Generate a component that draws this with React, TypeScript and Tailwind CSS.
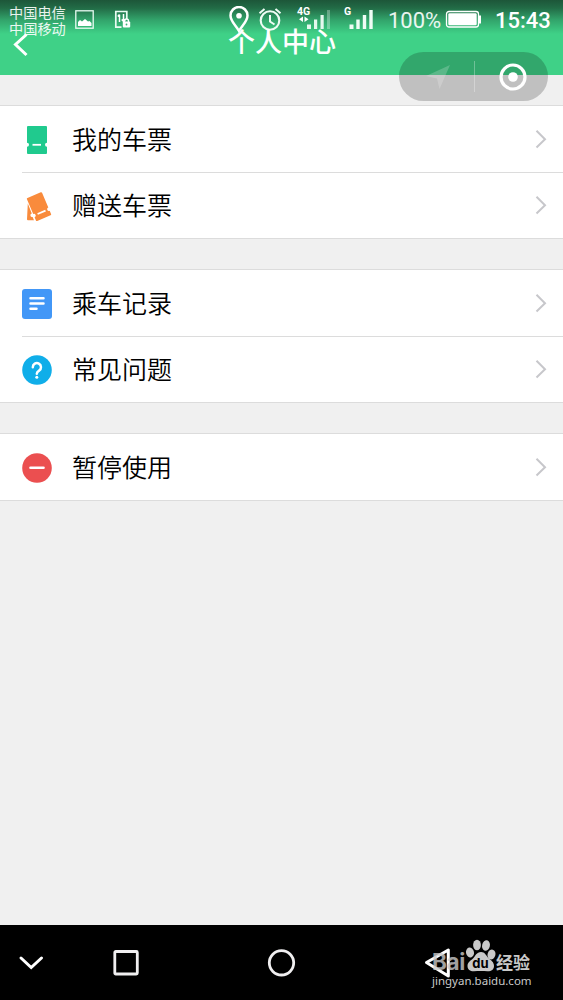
import React from 'react';

const TicketIcon = () => (
  <svg width="30" height="30" viewBox="0 0 30 30">
    <path
      fill="#20ca8e"
      d="M6 1H24a1 1 0 0 1 1 1V17.800a2 2 0 0 0 0 4V28a1 1 0 0 1-1 1H6a1 1 0 0 1-1-1V21.800a2 2 0 0 0 0-4V2a1 1 0 0 1 1-1z"
    />
    <path d="M10.500 19.800h8.500" stroke="#fff" strokeWidth="1.800" />
  </svg>
);

const GiftTicketIcon = () => (
  <svg width="30" height="30" viewBox="0 0 30 30">
    <path fill="#f98b3c" d="M5.800 12.500L9.800 22.500a1.700 1.700 0 0 0 .8 3.500L12 29.200H6a1 1 0 0 1-1-1z" />
    <g transform="translate(17 15.600) rotate(-23)">
      <path
        fill="#f98b3c"
        d="M-7.200 -12.500H7.200a1 1 0 0 1 1 1V4.500a1.800 1.800 0 0 0 0 3.600V11.500a1 1 0 0 1-1 1H-7.200a1 1 0 0 1-1-1V8.100a1.800 1.800 0 0 0 0-3.600V-11.500a1 1 0 0 1 1-1z"
      />
      <path d="M-4.200 6.300h8.600" stroke="#fff" strokeWidth="1.800" />
    </g>
  </svg>
);

const RecordIcon = () => (
  <svg width="30" height="30" viewBox="0 0 30 30">
    <rect width="30" height="30" rx="3" fill="#4297f7" />
    <path d="M8.500 9.300h13M8.500 14.500h13M8.500 19.800h6" stroke="#fff" strokeWidth="2.500" strokeLinecap="round" />
  </svg>
);

const QuestionIcon = () => (
  <svg width="30" height="30" viewBox="0 0 30 30">
    <circle cx="15" cy="15" r="14.800" fill="#10aee9" />
    <path
      d="M10.800 12.200a4.100 4.100 0 1 1 6.300 3.400c-1.700 1.100-2.300 1.600-2.300 3.200"
      fill="none"
      stroke="#fff"
      strokeWidth="2.500"
      strokeLinecap="round"
    />
    <circle cx="14.800" cy="22.300" r="1.500" fill="#fff" />
  </svg>
);

const PauseIcon = () => (
  <svg width="30" height="30" viewBox="0 0 30 30">
    <circle cx="15" cy="15" r="14.800" fill="#eb4f50" />
    <path d="M8.500 14.700h13" stroke="#fff" strokeWidth="2.600" strokeLinecap="round" />
  </svg>
);

const groups = [
  [
    { label: '我的车票', icon: <TicketIcon /> },
    { label: '赠送车票', icon: <GiftTicketIcon /> },
  ],
  [
    { label: '乘车记录', icon: <RecordIcon /> },
    { label: '常见问题', icon: <QuestionIcon /> },
  ],
  [{ label: '暂停使用', icon: <PauseIcon /> }],
];

const StatusBar: React.FC = () => (
  <div className="flex h-10 items-start text-white">
    <div className="ml-[9px] mt-1 w-[57px] whitespace-nowrap text-[14.200px] leading-4 text-white/90">
      <div>中国电信</div>
      <div>中国移动</div>
    </div>
    <svg className="ml-[9px] mt-[10px]" width="19" height="19" viewBox="0 0 19 19">
      <rect x=".8" y=".8" width="17.400" height="17.400" fill="none" stroke="#e9fbf2" strokeWidth="1.300" />
      <path d="M3 16v-4l2-2 2 1.500 3-2.500 3 2.500 1.500-.5 2 2V16z" fill="#fff" />
    </svg>
    <svg className="ml-5 mt-[10px]" width="17" height="19" viewBox="0 0 17 19">
      <path d="M7.500 17.200H1.800V1.500H12.800V9" fill="none" stroke="#e9fbf2" strokeWidth="1.700" />
      <path d="M5.500 12V4.500M3.800 6.500L5.500 4.500M9.500 4V11.500M7.700 9.500l1.800 2 1.800-2" fill="none" stroke="#fff" strokeWidth="1.500" />
      <rect x="8.800" y="11.500" width="7.400" height="6" rx="1" fill="#fff" />
      <path d="M10.500 12v-1a2 2 0 0 1 4 0v1" fill="none" stroke="#fff" strokeWidth="1.400" />
      <circle cx="12.500" cy="14.500" r=".9" fill="#35b575" />
    </svg>
    <svg className="ml-[98px] mt-[6px]" width="20" height="27" viewBox="0 0 20 27">
      <path
        d="M10 25C7 19.500 1.500 15.500 1.500 9.500a8.500 8.500 0 0 1 17 0C18.500 15.500 13 19.500 10 25z"
        fill="none"
        stroke="#fff"
        strokeWidth="2.500"
      />
      <circle cx="10" cy="9.800" r="2.800" fill="#fff" />
    </svg>
    <svg className="ml-[9px] mt-[7px]" width="24" height="25" viewBox="0 0 24 25">
      <circle cx="12" cy="13.500" r="9.300" fill="none" stroke="#effcf5" strokeWidth="2.100" />
      <path d="M12 8v6.500l4.500 3M1.500 6.200L6.500 2M22.500 6.200L17.500 2" fill="none" stroke="#effcf5" strokeWidth="2" />
    </svg>
    <div className="relative ml-[15px] h-8 w-[36px] font-[Roboto] text-[10.500px] font-bold leading-3">
      <span className="absolute left-0 top-[6px]">4G</span>
      <svg className="absolute left-0 top-[10px]" width="36" height="20" viewBox="0 0 36 20">
        <path d="M6 6.500v5.500L2 9.200zM7.500 6.500v5.500l4-2.800z" fill="#fff" />
        <path d="M10 19v-4.500h4V19zM17 19V9.500h3.200V19zM23.500 19V5h3.200v14z" fill="#e5f8ee" />
        <path d="M30 19V0h3v19z" fill="#fff" opacity=".3" />
      </svg>
    </div>
    <div className="relative ml-[11px] h-8 w-[30px] font-[Roboto] text-[10.500px] font-bold leading-3">
      <span className="absolute left-0 top-[6px]">G</span>
      <svg className="absolute left-0 top-[10px]" width="30" height="20" viewBox="0 0 30 20">
        <path d="M5.500 19v-4.500h4V19zM12.300 19V9.500h3.400V19zM18.800 19V5h3.400v14zM25.300 19V0h3.400v19z" fill="#effcf5" />
      </svg>
    </div>
    <span className="ml-[14px] mt-[9px] w-[55px] whitespace-nowrap font-[Roboto] text-[22px] leading-6 text-white/90">100%</span>
    <svg className="ml-[2px] mt-[10px]" width="37" height="19" viewBox="0 0 37 19">
      <rect x="1.500" y="1.500" width="32" height="15.500" rx="2.500" fill="none" stroke="#fff" strokeWidth="1.300" />
      <rect x="3.300" y="3.300" width="28.400" height="12" rx="1.200" fill="#fff" />
      <path d="M34 5.500h2v8H34z" fill="#fff" />
    </svg>
    <span className="ml-[13px] mt-[9px] whitespace-nowrap font-[Roboto] text-[22px] font-medium leading-6">15:43</span>
  </div>
);

const Header: React.FC = () => (
  <header className="relative h-[75px] bg-[linear-gradient(to_bottom,#1d5639_0px,#226b46_8px,#32a46b_20px,#3fd187_34px)]">
    <StatusBar />
    <svg className="absolute left-[12px] top-[33px]" width="18" height="24" viewBox="0 0 18 24">
      <path d="M14.500 1.500L3.500 11.500l11 10.500" fill="none" stroke="#fff" strokeWidth="3" />
    </svg>
    <h1 className="absolute left-[228px] top-[23px] whitespace-nowrap text-[27px] font-medium leading-9 text-white">个人中心</h1>
    <div className="absolute left-[399px] top-[52px] z-10 flex h-[49px] w-[149px] items-center rounded-full bg-black/20">
      <div className="flex flex-1 justify-center pl-1">
        <svg width="26" height="26" viewBox="0 0 26 26">
          <path d="M25 1L14.500 25l-2.500-10.500L1 12z" fill="#fff" opacity=".2" />
        </svg>
      </div>
      <div className="h-[31px] w-px bg-white/30" />
      <div className="flex flex-1 justify-center pl-[3px]">
        <svg width="28" height="28" viewBox="0 0 28 28">
          <circle cx="14" cy="14" r="12" fill="none" stroke="#fff" strokeWidth="3.200" />
          <circle cx="14" cy="14" r="4.800" fill="#fff" />
        </svg>
      </div>
    </div>
  </header>
);

const NavigationBar: React.FC = () => (
  <nav className="relative flex h-[75px] items-center bg-black">
    <svg className="ml-[18px]" width="26" height="18" viewBox="0 0 26 18">
      <path d="M3 4l10.200 9.500L23.500 4" fill="none" stroke="#fff" strokeWidth="3" strokeLinecap="round" />
    </svg>
    <svg className="ml-[68px]" width="28" height="28" viewBox="0 0 28 28">
      <rect x="2.800" y="2.500" width="22.500" height="22.500" rx="1" fill="none" stroke="#f0eff0" strokeWidth="2.800" />
    </svg>
    <svg className="ml-[127px]" width="30" height="30" viewBox="0 0 30 30">
      <circle cx="14.500" cy="14.800" r="12.200" fill="none" stroke="#f0eff0" strokeWidth="2.800" />
    </svg>
    <svg className="ml-[127px]" width="30" height="32" viewBox="0 0 30 32">
      <path d="M24.300 3v26L2.500 15.500z" fill="none" stroke="#fff" strokeWidth="3" strokeLinejoin="round" />
    </svg>
    <div className="absolute left-[432px] top-[14px] text-[#c9c9c9]">
      <div className="relative flex h-[34px] items-end">
        <span className="w-[34px] font-[Inter] text-[22.500px] font-bold leading-[22px] tracking-[-0.300px] opacity-80">Bai</span>
        <svg className="absolute left-[33px] top-0" width="31" height="34" viewBox="0 0 31 34" fill="#c9c9c9">
          <ellipse cx="5" cy="13.500" rx="4" ry="5" transform="rotate(-12 5 13.500)" />
          <ellipse cx="12" cy="6" rx="3.900" ry="5.300" />
          <ellipse cx="21" cy="6.500" rx="3.900" ry="5.300" transform="rotate(12 21 6.500)" />
          <ellipse cx="26.500" cy="15.500" rx="3.900" ry="5" transform="rotate(15 26.500 15.500)" />
          <path d="M16 13c-4.500 0-5.500 4-8 6.500-3 2.500-5.500 4-5.500 7.500 0 3.500 3 5.500 6.500 5.300 4-.4 9.500-.4 13.500 0 3.500.2 6.500-1.800 6.500-5.300 0-4-3-5.500-5.500-8C20.500 16 20 13 16 13z" />
          <text x="15.500" y="29" textAnchor="middle" fontFamily="Inter" fontSize="13" fontWeight="700" fill="#000">du</text>
        </svg>
        <span className="ml-[30px] whitespace-nowrap text-[17px] font-bold leading-[22px]">经验</span>
      </div>
      <div className="whitespace-nowrap font-['Noto_Sans'] text-[11.500px] leading-[15px]">jingyan.baidu.com</div>
    </div>
  </nav>
);

const App: React.FC = () => {
  return (
    <div className="flex h-[1000px] w-[563px] flex-col overflow-hidden bg-[#f0f0f0] font-['Noto_Sans_CJK_SC',sans-serif]">
      <Header />
      <main className="flex flex-1 flex-col gap-[30px] pt-[30px]">
        {groups.map((items) => (
          <section key={items[0].label} className="border-y border-[#dcdcdc] bg-white">
            {items.map((item, index) => (
              <div key={item.label} className="flex pl-[22px]">
                <div
                  className={
                    index > 0
                      ? 'flex h-[66px] flex-1 items-center border-t border-[#dcdcdc] pb-px'
                      : 'flex h-[66px] flex-1 items-center'
                  }
                >
                  <div className="pt-px">{item.icon}</div>
                  <span className="ml-5 pb-[2px] text-[25px] font-[350] leading-9 text-black">{item.label}</span>
                  <svg className="ml-auto mr-4" width="12" height="20" viewBox="0 0 12 20">
                    <path d="M1.500 1.800L10 10.200l-8.500 8.300" fill="none" stroke="#c7c7cb" strokeWidth="2" />
                  </svg>
                </div>
              </div>
            ))}
          </section>
        ))}
      </main>
      <NavigationBar />
    </div>
  );
};

export default App;
